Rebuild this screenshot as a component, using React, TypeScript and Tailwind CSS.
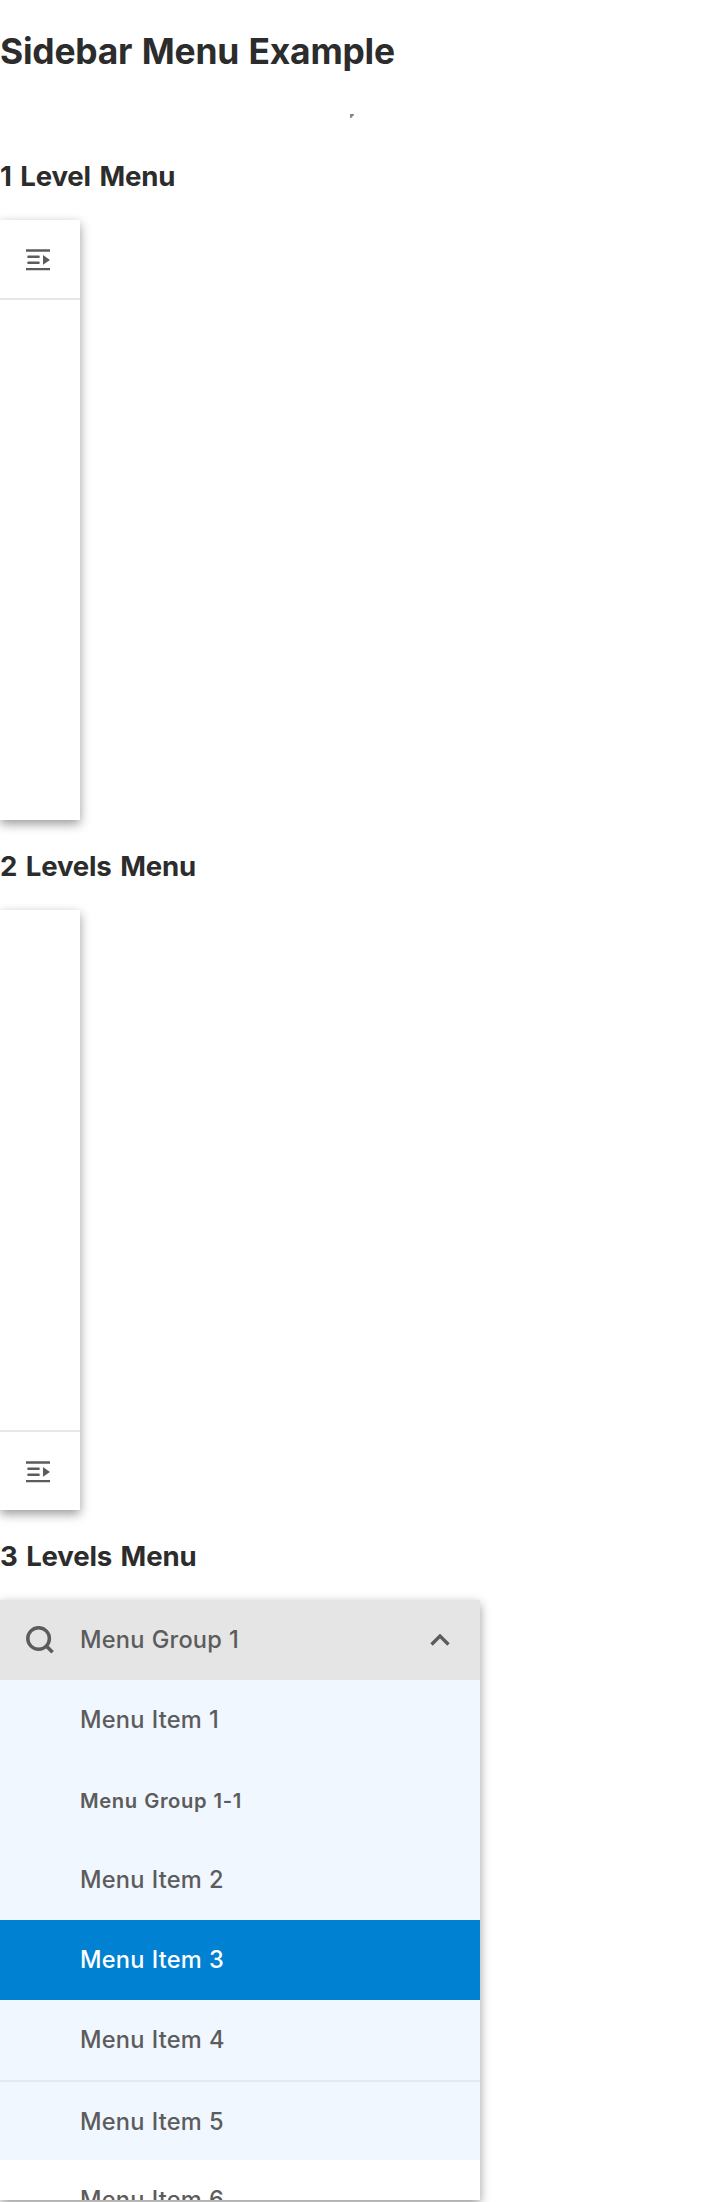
import React from "react";

function ExpandIcon() {
  return (
    <svg className="mt-0.5 ml-[26px] h-6 w-6" viewBox="0 0 24 24" fill="none">
      <path d="M0 2.5H24M0 21.1H24" stroke="#5c5c5c" strokeWidth="2.4" />
      <path d="M2.4 8.7H12.6M2.4 14.8H12.6" stroke="#5c5c5c" strokeWidth="2.4" strokeLinecap="round" />
      <path d="M17 7.1V16.7L24 12Z" fill="#5c5c5c" />
    </svg>
  );
}

function SearchIcon() {
  return (
    <svg className="h-7 w-7" viewBox="0 0 28 28" fill="none" stroke="#5c5c5c" strokeWidth="3.5">
      <circle cx="12.6" cy="12.5" r="10.8" />
      <path d="M20 19.8L26.6 26.2" strokeWidth="3.6" />
    </svg>
  );
}

const panel = "h-[600px] bg-white shadow-[0_4px_10px_rgba(0,0,0,0.4)]";
const heading = "text-[27.6px] leading-[36px] font-bold tracking-[-0.18px] [word-spacing:2.2px]";

function Item({ label, selected = false }: { label: string; selected?: boolean }) {
  return (
    <div className={"flex h-20 shrink-0 items-center pl-20 " + (selected ? "bg-[#0081d1] text-white" : "bg-[#f0f7ff]")}>
      {label}
    </div>
  );
}

export default function App() {
  return (
    <div className="h-[2202px] overflow-hidden bg-white font-['Inter',sans-serif] text-[#2c2c2c]">
      <h1 className="pt-[29px] text-[35.4px] leading-[46px] font-bold tracking-[-0.22px] [word-spacing:1.4px] whitespace-nowrap">Sidebar Menu Example</h1>
      <div className="flex h-[83px] pt-[39px] pl-[350px]">
        <svg className="h-1 w-1" viewBox="0 0 4 4"><path d="M0 0H4V1L1 4H0Z" fill="#858585" /></svg>
      </div>
      <h2 className={heading}>1 Level Menu</h2>
      <div className="pt-[26px]">
        <div className={panel + " w-20"}>
          <div className="flex h-20 items-center border-b-2 border-[#e6e6ec]"><ExpandIcon /></div>
        </div>
      </div>
      <h2 className={heading + " pt-[28px]"}>2 Levels Menu</h2>
      <div className="pt-[26px]">
        <div className={panel + " flex w-20 flex-col justify-end"}>
          <div className="flex h-20 items-center border-t-2 border-[#e6e6ec]"><ExpandIcon /></div>
        </div>
      </div>
      <h2 className={heading + " pt-[28px]"}>3 Levels Menu</h2>
      <div className="pt-[26px]">
        <div className={panel + " w-[480px]"}>
          <div className="flex h-full flex-col overflow-hidden text-[23.6px] font-[540] tracking-[0.2px] [word-spacing:0.6px] text-[#5c5c5c]">
            <div className="flex h-20 shrink-0 items-center bg-[#e5e5e5] pl-[26px]">
              <SearchIcon />
              <span className="ml-[26px] flex-1">Menu Group 1</span>
              <svg className="mr-[30px] h-3 w-5" viewBox="0 0 20 12" fill="none"><path d="M1.5 10.5L10 2L18.5 10.5" stroke="#5c5c5c" strokeWidth="3.3" /></svg>
            </div>
            <Item label="Menu Item 1" />
            <div className="flex h-20 shrink-0 items-center bg-[#f0f7ff] pt-0.5 pl-20 text-[20.2px] font-semibold tracking-[0.6px] [word-spacing:0.8px]">Menu Group 1-1</div>
            <Item label="Menu Item 2" />
            <Item label="Menu Item 3" selected />
            <Item label="Menu Item 4" />
            <div className="h-0.5 shrink-0 bg-[#e5e8ec]" />
            <div className="flex h-[78px] shrink-0 items-center bg-[#f0f7ff] pt-0.5 pl-20">Menu Item 5</div>
            <div className="flex h-20 shrink-0 items-center pl-20">Menu Item 6</div>
          </div>
        </div>
      </div>
    </div>
  );
}
